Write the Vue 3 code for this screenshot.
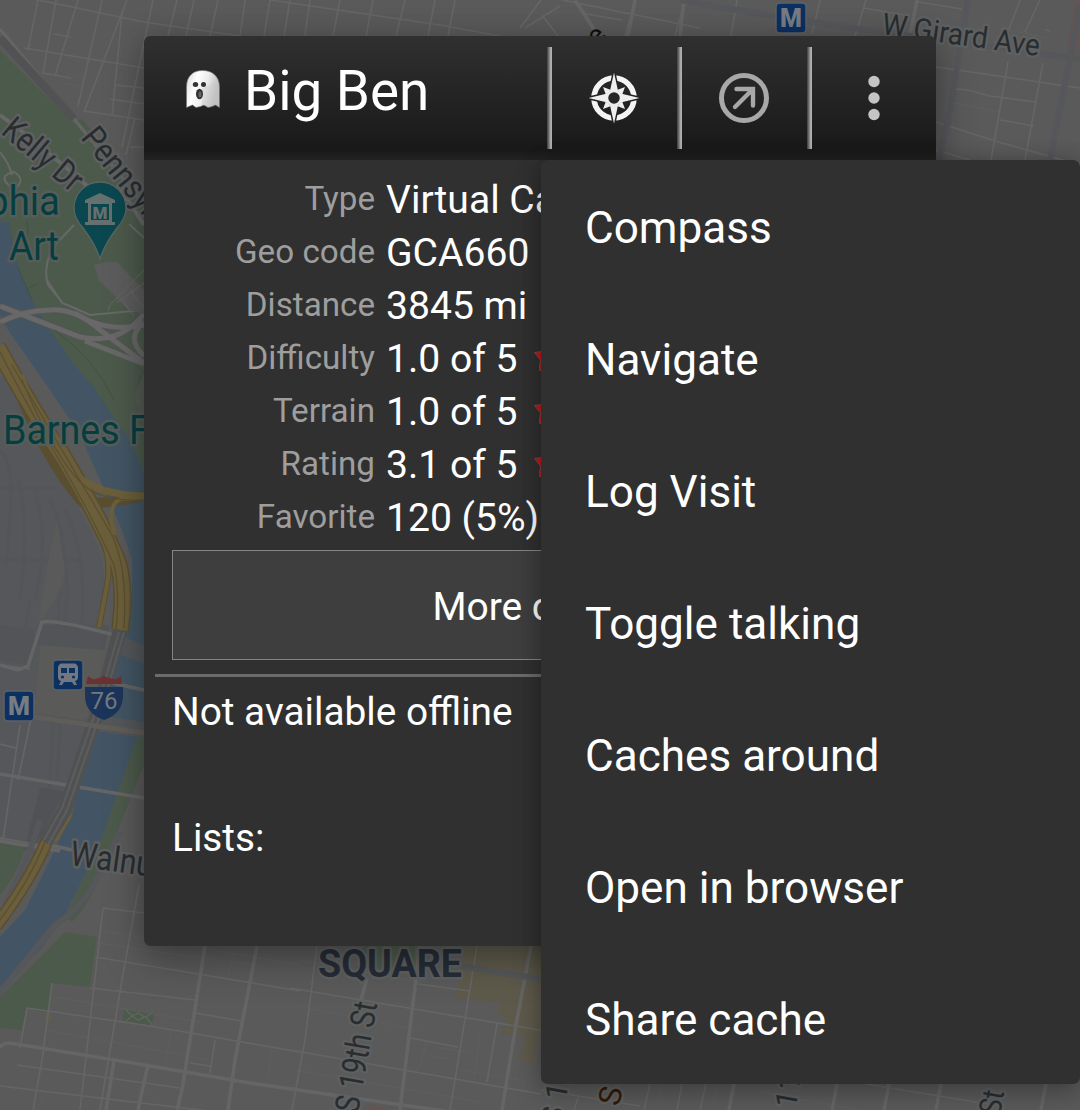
<script setup>
const menuItems = ['Compass', 'Navigate', 'Log Visit', 'Toggle talking', 'Caches around', 'Open in browser', 'Share cache']

const details = [
  { label: 'Type', value: 'Virtual Cache' },
  { label: 'Geo code', value: 'GCA660' },
  { label: 'Distance', value: '3845 mi' },
  { label: 'Difficulty', value: '1.0 of 5', stars: true },
  { label: 'Terrain', value: '1.0 of 5', stars: true },
  { label: 'Rating', value: '3.1 of 5', stars: true },
  { label: 'Favorite', value: '120 (5%)' },
]

const minorRoads = [
  // north-west blocks
  'M38 0L28 50M56 0L43 73L71 78M78 0L55 76M102 0L78 106M127 0L84 112M153 0L122 147M177 0L168 36M194 0L186 36M218 0L210 36M245 0L240 36M270 0L264 36M290 0L284 36',
  'M0 -8L144 22L240 36M24 48L144 68M54 34L71 37M116 85L144 88M110 99L144 104M84 111L144 120M122 13L112 116M130 147H144M135 118L126 155',
  // blocks above the header
  'M310 0L305 36M340 0L333 36M373 0L366 36M405 0L396 36M435 0L428 36M455 0L448 36M270 0L440 25L500 36',
  'M541 0L520 28M525 28L560 6M542 15L558 36M562 0L700 28M586 14L622 20M636 0L625 36M685 0L675 36M737 0L731 36M820 0L812 34M864 8L910 16M866 0L855 36M918 0L908 36M918 2L962 9M1020 0L1008 32M1040 0L1025 32',
  // blocks to the right of the header
  'M936 67L1080 88M955 89L968 90L990 96L1036 102M1008 62L991 160M1043 63L1025 160M936 122L995 141L1080 165M936 150L970 160M1000 120L1034 126M1045 30L1050 31',
  // south-west grid
  'M103 908L80 1110M139 885L122 980L100 1110M103 908L144 913M95 957L300 991M90 988L195 1000M27 1008L150 1026L300 1052M27 1008L20 1048M52 983L42 1060L33 1110M0 1086L300 1122M17 1065L180 1088',
  // south grid
  'M317 946L305 1040L292 1110M290 988L545 1031M290 1050L541 1094M410 1038L458 1047M477 946L450 1110M418 984L470 991M497 1024L487 1082M195 1013L242 1021M215 1040L210 1073M190 1063L210 1066',
  'M541 1090L640 1106M578 1098L574 1110M650 1084L644 1110M682 1084L677 1110M706 1084L700 1110M866 1084L1000 1106',
  // west-bank grid
  'M20 725L3 840M0 744L16 748M0 665L30 669M35 700L18 780M0 838L70 850',
]

const faintRoads = [
  'M68 74L84 77M64 84L83 86M98 930L300 965M97 943L260 966M50 996L200 1022M45 1030L210 1060M43 1100L35 1110M298 960L420 982M296 1006L420 1030M295 1070L480 1102M428 1040L419 1069M440 1048L472 1053M480 1036L474 1080M430 1056L450 1059M460 1070L520 1080',
  'M955 103L1000 112M1000 28L1048 38M236 950L227 978M171 1030L165 1067M272 1050L268 1075M760 1092L860 1110M664 1084L658 1100M718 1084L712 1105',
]

const greyRoads = ['M680 0L760 14L860 29L1080 59', 'M1080 6L1050 160', 'M968 0L950 110L939 160', 'M460 966L541 979', 'M120 832L99 875Q85 905 55 925L-5 998', 'M40 820Q28 862 5 905']
</script>

<template>
  <main class="screen">
    <svg class="map" width="1080" height="1110" viewBox="0 0 1080 1110">
      <rect width="1080" height="1110" fill="#5a5a5a" />

      <!-- rail yards -->
      <path d="M0 375L18 392Q55 465 85 520Q108 560 104 600L96 650L112 660L70 830L45 860L0 835Z" fill="#55575a" />
      <path d="M0 450Q15 465 10 515L6 570M18 480Q30 520 20 600M35 490Q50 540 35 600M50 500Q75 550 62 640M65 510Q90 560 80 640M0 488H55M0 560H80M0 643Q50 630 144 650M60 590L48 820M68 590L57 780M30 600L20 660" fill="none" stroke="#535558" stroke-width="3" />
      <path d="M57 520L65 570Q60 600 38 622Q42 590 57 520Z" fill="#5a5a5a" />
      <path d="M42 625L112 634L105 680Q95 720 82 720L35 713Z" fill="#5a5a58" />
      <path d="M0 625L35 630L30 665L0 660ZM40 625H110L104 650L38 645Z" fill="#525457" />
      <path d="M40 788L65 792L30 855L24 850Z" fill="#505255" />

      <!-- parks -->
      <path d="M0 50L72 122L82 119L144 190V470L100 400L30 310L0 222Z" fill="#4c5a4b" />
      <path d="M144 735L137 738L98 848L65 917L72 922Q93 900 102 870L144 765Z" fill="#4c5a4b" />
      <path d="M65 932L97 937L90 987L52 983L48 1013L27 1008L21 1030L0 1028V997Z" fill="#4c5a4b" />
      <path d="M0 843L25 847Q20 870 0 895Z" fill="#4c5a4b" />
      <path d="M124 1009L154 1013L152 1026L123 1021Z" fill="#4c5a4b" />
      <path d="M365 945H415V970H355Z" fill="#4c5a4b" />
      <path d="M144 365V425L135 400Z" fill="#555b55" />

      <!-- river -->
      <path d="M0 222H9L12 240L18 265L32 300L50 330L72 362L92 385L110 412L130 440L144 472V735L137 738L115 800L98 848L85 875L65 915L40 950L0 988V937L25 910L45 870L62 835L80 785L97 735L108 700L122 635L132 590V560L122 530L100 480L80 435L50 390L8 330L0 315Z" fill="#435564" />
      <path d="M120 635L144 645V664L118 654ZM95 715L144 722V738L88 730Z" fill="#54575a" />

      <!-- commercial blocks -->
      <path d="M465 946H541V1030L533 1063L519 1060L524 1037L500 1033L506 1018L497 1015L500 1003L454 997L460 979Z" fill="#5e5a4b" />
      <path d="M1075 0H1080V52L1067 50ZM936 150L940 160H936ZM368 1105L390 1108V1110H366Z" fill="#635553" />
      <path d="M46 1013L52 1014L51 1021L45 1020Z" fill="#625d4d" />

      <!-- streets -->
      <g fill="none" stroke="#5f5f5f">
        <path v-for="d in faintRoads" :key="d" :d="d" stroke-width="1" />
      </g>
      <g fill="none" stroke="#656565">
        <path v-for="d in minorRoads" :key="d" :d="d" stroke-width="1.7" />
        <path d="M0 1048Q2 1043 10 1043L115 1060L250 1083L541 1125M257 946L235 1060L228 1110M205 946L182 1090L177 1110M114 1061L106 1110M148 1065L138 1110M420 946L400 1110M531 946L515 1030L502 1110M367 978L361 1000M734 1084L729 1110M837 1084L832 1110M889 1084L884 1110M941 1084L936 1110M1046 1084L1041 1110M635 0L628 36M684 0L680 36M917 0L910 36" stroke-width="3.6" />
        <path d="M575 0L597 34" stroke-width="4" />
        <path d="M0 29L144 204M0 774L144 798M0 665L18 670L28 666L42 622Q55 619 114 635M50 845L72 850M112 683L144 690M0 841L60 851" stroke-width="3.5" />
      </g>
      <g fill="none" stroke="#55575a" stroke-width="6">
        <path v-for="d in greyRoads" :key="d" :d="d" />
      </g>
      <path d="M0 38L74 119" fill="none" stroke="#515254" stroke-width="8" />

      <!-- parkway -->
      <g fill="none" stroke="#555" stroke-width="7">
        <path d="M0 322Q22 311 50 310Q75 308 100 330L144 363M0 306L80 337Q120 345 144 314M75 313Q105 333 144 325" />
      </g>
      <g fill="none" stroke="#686868" stroke-width="5">
        <path d="M0 322Q22 311 50 310Q75 308 100 330L144 363M0 306L80 337Q120 345 144 314M75 313Q105 333 144 325M85 341L144 364M144 322Q125 338 144 356" />
        <path d="M0 115L28 136L75 175L95 193M144 225L118 185" stroke-width="4" />
        <path d="M0 152Q10 165 12 175M12 188Q-4 176 14 172Q26 179 16 188M74 225L52 248Q43 270 48 285L62 302M129 224L144 238M47 280L62 303L72 307L90 315L144 310" stroke-width="2" stroke="#676967" />
      </g>
      <path d="M94 265L106 262L118 262L128 274L111 292L99 281ZM111 292L128 274L144 290V314L128 310Z" fill="#5b5c5b" />
      <path d="M144 270L110 305L108 311M144 283L116 303M122 300L134 316M130 290L144 308" stroke="#656765" fill="none" />
      <path d="M27 220L28 235M17 266L32 300M27 289L37 284M55 330Q95 360 114 400M138 385L144 370" stroke="#405340" stroke-width="1" fill="none" />

      <!-- expressway -->
      <g fill="none" stroke="#5a4e31">
        <path d="M-3 347Q35 415 62 455Q98 515 117 560Q126 585 120 630" stroke-width="18" />
        <path d="M12 375Q45 460 82 502Q105 505 144 496" stroke-width="10" />
        <path d="M48 838Q32 878 -4 926" stroke-width="13" />
        <path d="M76 472L95 520Q113 555 107 585L99 627" stroke-width="6" />
      </g>
      <g fill="none" stroke="#6b5f3b">
        <path d="M-3 347Q35 415 62 455Q98 515 117 560Q126 585 120 630" stroke-width="15" />
        <path d="M20 375Q60 470 86 482Q105 495 144 496" stroke-width="7" />
        <path d="M48 838Q32 878 -4 926" stroke-width="10" />
        <path d="M76 472L95 520Q113 555 107 585L99 627M144 499H121Q111 502 111 520L115 535" stroke-width="4" />
        <path d="M76 790L70 817L55 842" stroke-width="3" />
      </g>
      <path d="M0 352Q35 420 62 465Q94 520 114 565Q120 590 116 630M12 365Q80 480 112 535Q128 570 124 628M22 380Q60 470 90 490Q110 502 144 500M45 842Q30 880 0 920" fill="none" stroke="#5b4f31" stroke-width="1.3" />
      <path d="M120 630L100 705L65 810L45 842" fill="none" stroke="#505152" stroke-width="14" />
      <path d="M119 632L97 708L62 808L44 840M124 632L100 715L67 810L48 845" fill="none" stroke="#5d5d5d" stroke-width="2" />
      <path d="M35 717L144 733" fill="none" stroke="#5f5d58" stroke-width="5" />

      <path d="M125 1009L132 1016L125 1022M153 1012L146 1017L152 1025M132 1016L138 1013L145 1017L138 1020Z" fill="none" stroke="#5d655c" stroke-width="1.5" />

      <!-- street names -->
      <g class="street">
        <text transform="translate(0 133) rotate(40) scale(.82 1)" font-size="34">Kelly Dr</text>
        <text transform="translate(80 138) rotate(51) scale(.88 1)" font-size="33">Pennsylvania</text>
        <text transform="translate(69 865) rotate(8) scale(.86 1)" font-size="35">Walnut St</text>
        <text transform="translate(881 34) rotate(8)" font-size="30" textLength="159" lengthAdjust="spacingAndGlyphs">W Girard Ave</text>
        <text transform="translate(358 1114) rotate(-80)" font-size="34" textLength="112" lengthAdjust="spacingAndGlyphs">S 19th St</text>
        <text transform="translate(561 1126) rotate(-80)" font-size="30">S 12th St</text>
        <text transform="translate(791 1134) rotate(-80)" font-size="30">S 11th St</text>
        <text transform="translate(1000 1116) rotate(-80) scale(.85 1)" font-size="31">St</text>
      </g>
      <text transform="translate(619 1107) rotate(-78)" class="broad">S</text>
      <text transform="translate(598 47) rotate(-50)" class="ridge">e</text>
      <g class="place">
        <text transform="translate(60 215) scale(.96 1)" text-anchor="end">Philadelphia</text>
        <text transform="translate(59 260) scale(.93 1)" text-anchor="end">Art</text>
        <text transform="translate(3 444) scale(.94 1)">Barnes Foundation</text>
      </g>
      <text class="district" x="318" y="977" textLength="144" lengthAdjust="spacingAndGlyphs">SQUARE</text>

      <!-- museum pin -->
      <path d="M100 259Q96 245 83 228Q74 218 74 208A26 26 0 0 1 126 208Q126 218 117 228Q104 245 100 259Z" fill="#0a474e" stroke="#5b6463" stroke-width="1.3" />
      <path d="M85 203V200L100 193L115 200V203H112V222H115V225H85V222H88V203ZM91 204V220H109V204Z" fill="#657171" fill-rule="evenodd" />
      <text x="100" y="218.5" text-anchor="middle" class="pin-letter">M</text>

      <!-- transit badges -->
      <g v-for="p in [[776, 3], [4, 691]]" :key="p[0]" :transform="`translate(${p[0]} ${p[1]})`">
        <rect width="30" height="30" rx="4" fill="#0b3062" stroke="#5f6265" stroke-width="1.5" />
        <text x="15" y="24" text-anchor="middle" class="metro">M</text>
      </g>
      <g transform="translate(53 660)">
        <rect width="30" height="30" rx="4" fill="#0b3062" stroke="#5f6265" stroke-width="1.5" />
        <path d="M8 3.5H22Q25 5 25 8V17Q25 20 22 21L24 25H21L19 22H11L9 25H6L8 21Q5 20 5 17V8Q5 5 8 3.5ZM8 8V13H14V8ZM16 8V13H22V8Z" fill="#737880" fill-rule="evenodd" />
        <circle cx="9.5" cy="17" r="1.6" fill="#0b3062" /><circle cx="20.5" cy="17" r="1.6" fill="#0b3062" />
      </g>
      <path d="M85 687H123V697Q122 714 104 720Q86 714 85 697Z" fill="#1b355a" />
      <path d="M86 684L88 676Q93 681 98 678Q101 678 104 675.500Q107 678 110 678Q116 681 121 676L122 684Z" fill="#6b3231" />
      <text x="104" y="709" text-anchor="middle" class="shield">76</text>
    </svg>

    <section class="card">
      <header class="bar">
        <div class="title">
          <svg width="38" height="42" viewBox="0 0 38 42">
            <defs>
              <linearGradient id="ghost" x1="0" x2="1" y1="0" y2=".3">
                <stop offset="0" stop-color="#d4d4d4" /><stop offset=".35" stop-color="#fff" /><stop offset=".65" stop-color="#ececec" /><stop offset="1" stop-color="#bdbdbd" />
              </linearGradient>
            </defs>
            <path d="M2.500 38.500V18C2.500 7 9 1.500 18.500 1.500S35.500 7 35.500 18V38.500L31.500 36L28 37.500L24 38.500L20 36L16.500 37.500L12 38.500L8.500 36L6 37Z" fill="url(#ghost)" stroke="#777" stroke-opacity=".6" />
            <path d="M18 19Q27 17 33 10Q35 14 35 20V34Q28 38 18 36Z" fill="#c8c8c8" opacity=".4" />
            <ellipse cx="11.500" cy="15.500" rx="2.700" ry="2.500" fill="#333" /><ellipse cx="19.500" cy="15.500" rx="2.500" ry="2.500" fill="#333" />
            <ellipse cx="15.500" cy="25" rx="3.500" ry="5.200" fill="#333" /><ellipse cx="16" cy="25.500" rx="1.500" ry="3" fill="#666" />
          </svg>
          <h1>Big Ben</h1>
        </div>
        <button class="action" aria-label="Compass">
          <svg width="54" height="54" viewBox="-27 -27 54 54">
            <circle r="20" fill="none" stroke="#f4f4f4" stroke-width="5.500" />
            <path d="M0 -25.500L4.500 -5L25.500 0L4.500 5L0 25.500L-4.500 5L-25.500 0L-4.500 -5Z" fill="#eee" stroke="#242424" stroke-width="3" paint-order="stroke" />
            <path d="M-11 -11L-3 -8L-8 -3ZM11 -11L3 -8L8 -3ZM11 11L3 8L8 3ZM-11 11L-3 8L-8 3Z" fill="#eee" />
            <circle r="7" fill="#262626" stroke="#eee" stroke-width="2.500" />
          </svg>
        </button>
        <button class="action" aria-label="Navigate">
          <svg width="50" height="50" viewBox="-25 -25 50 50" fill="none" stroke="#a8a8a8">
            <circle r="22.500" stroke-width="5" />
            <path d="M-9 9L9 -9M-7.500 -9H9V7.500" stroke-width="4.400" stroke-linecap="round" stroke-linejoin="miter" />
          </svg>
        </button>
        <button class="action last" aria-label="More options">
          <svg width="12" height="46" viewBox="0 0 12 46" fill="#c4c4c4">
            <circle cx="6" cy="6.500" r="5.700" /><circle cx="6" cy="23" r="5.700" /><circle cx="6" cy="39.500" r="5.700" />
          </svg>
        </button>
      </header>
      <dl class="details">
        <div v-for="row in details" :key="row.label" class="row">
          <dt>{{ row.label }}</dt>
          <dd>
            {{ row.value }}
            <svg v-if="row.stars" class="star" width="26" height="26" viewBox="0 0 26 26">
              <path d="M0.500 4.500L8 3.500L13 -4L17 4L26 5L20 12L21 21L13 17L6 23L5.500 20L6.500 12Z" fill="#c51515" stroke="#7c4a4a" stroke-width="1" />
            </svg>
          </dd>
        </div>
      </dl>
      <button class="more">More details</button>
      <hr>
      <p class="offline">Not available offline</p>
      <p class="lists">Lists:</p>
    </section>

    <nav class="menu">
      <a v-for="item in menuItems" :key="item">{{ item }}</a>
    </nav>
  </main>
</template>

<style>
body { background: #5a5a5a; }
</style>

<style scoped>
.screen { position: relative; isolation: isolate; width: 1080px; height: 1110px; overflow: hidden; font-family: Roboto, sans-serif; color: #fff; }
.map { display: block; }
.map text { font-family: Roboto, sans-serif; paint-order: stroke; stroke: #5f6060; stroke-width: 5px; stroke-linejoin: round; }
.street text { fill: #282d31; }
.map .broad { fill: #351a05; font-size: 31px; }
.map .ridge { fill: #101010; font-size: 28px; stroke: none; }
.place text { fill: #073d3f; font-size: 40px; }
.map .place text { stroke: #555d5a; }
.map .district { fill: #262d37; font-size: 39px; font-weight: 700; }
.map .pin-letter { fill: #657171; font-size: 17px; font-weight: 900; stroke: none; }
.map .metro { fill: #777b82; font-size: 25px; font-weight: 900; stroke: none; }
.map .shield { fill: #747980; font-size: 24px; stroke: none; }
.card { position: absolute; left: 144px; top: 36px; width: 792px; height: 910px; border-radius: 7px; overflow: hidden; background: #303030; box-shadow: 0 14px 40px rgba(0, 0, 0, .3), 0 0 24px rgba(0, 0, 0, .12); }
.bar { display: flex; height: 124px; background: linear-gradient(#303030, #191919 92%, #222); }
.title { display: flex; flex: none; width: 403px; padding: 33px 0 0 40px; box-sizing: border-box; gap: 22px; }
h1 { margin: -10px 0 0; font-size: 54.8px; line-height: 64px; font-weight: 400; white-space: nowrap; }
button { font: inherit; color: inherit; border: 0; padding: 0; }
.action { flex: none; width: 130px; margin: 11px 0; box-sizing: border-box; padding-left: 4px; display: flex; align-items: center; justify-content: center; background: linear-gradient(90deg, #3c3c3c, #777 40%, #b0b0b0 75%, #b0b0b0) left / 5px 100% no-repeat; }
.action.last { width: 129px; }
.details { margin: 13px 0 0; }
.row { display: flex; height: 53px; align-items: flex-start; line-height: 53px; }
dt { margin-top: -1px; width: 231px; text-align: right; color: #9e9e9e; font-size: 33.2px; }
dd { margin: 1px 0 0 11px; font-size: 39.1px; white-space: nowrap; display: flex; align-items: center; }
.star { margin: 3px 0 0 16.500px; }
.more { display: block; box-sizing: border-box; width: 736px; height: 110px; margin: 6px 28px 0; background: #3e3e3e; border: 1px solid #858585; padding-top: 4px; font-size: 39px; text-align: center; }
hr { height: 3px; margin: 14px 11px 0; border: 0; background: #6b6b6b; }
p { margin: 0 0 0 28px; font-size: 38.8px; line-height: 46px; }
.offline { margin-top: 12px; }
.lists { margin-top: 80px; }
.menu { position: absolute; left: 541px; top: 160px; width: 539px; height: 924px; border-radius: 7px; background: #303030; box-shadow: 0 10px 30px rgba(0, 0, 0, .22), 0 0 20px rgba(0, 0, 0, .2); }
.menu a { display: flex; align-items: center; height: 132px; padding: 4px 0 0 44px; box-sizing: border-box; font-size: 44.1px; }
</style>
